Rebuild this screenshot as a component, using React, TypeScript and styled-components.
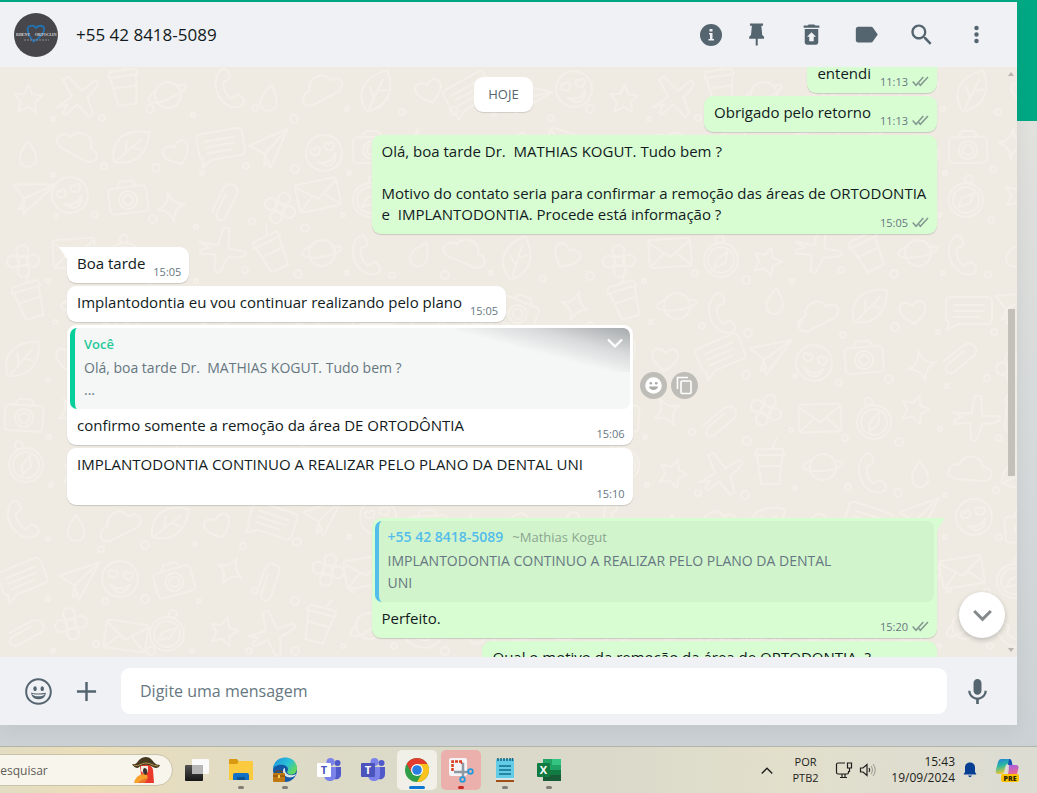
import React from "react";
import styled, { createGlobalStyle, css } from "styled-components";

const GlobalStyle = createGlobalStyle`
  * { box-sizing: border-box; }
  body { margin: 0; font-family: "Open Sans", "Noto Sans", sans-serif; font-weight: 400; color: #111b21; }
  button { border: 0; padding: 0; background: none; font: inherit; color: inherit; cursor: pointer; }
  svg { display: block; }
`;

/* ---------- page frame ---------- */

const Desktop = styled.div`
  display: flex;
  flex-direction: column;
  height: 100vh;
  min-height: 480px;
  overflow: hidden;
`;

const Stage = styled.div`
  flex: 1;
  min-height: 0;
  display: flex;
  padding: 2px 20px 21px 0;
  background: linear-gradient(#00a884 0 121px, #e1e1dd 121px, #d5d9da 460px, #ccd1d5 100%);
`;

const Chat = styled.main`
  flex: 1;
  min-width: 0;
  display: flex;
  flex-direction: column;
  background: #efeae2;
  box-shadow: 0 6px 18px rgba(11, 20, 26, 0.06);
`;

const Header = styled.header`
  display: flex;
  align-items: center;
  height: 65px;
  padding: 0 13px 0 14px;
  background: #f0f1f5;
  flex: none;
`;

const Contact = styled.h1`
  flex: 1;
  margin: 0 0 0 18px;
  font-size: 17px;
  font-weight: 400;
  line-height: 24px;
`;

const HeaderButton = styled.button<{ $narrow?: boolean }>`
  display: grid;
  place-items: center;
  width: ${(p) => (p.$narrow ? 37 : 55)}px;
  height: 44px;
  color: #54656f;
`;

const Panel = styled.section`
  position: relative;
  flex: 1;
  min-height: 0;
  overflow: hidden;
`;

const Wallpaper = styled.svg`
  position: absolute;
  inset: 0;
  width: 100%;
  height: 100%;
`;

const Messages = styled.div`
  position: relative;
  display: flex;
  flex-direction: column;
  gap: 3px;
  margin-top: -10px;
  padding: 0 80px 0 67px;
`;

/* ---------- messages ---------- */

const Row = styled.div<{ $out?: boolean; $first?: boolean }>`
  display: flex;
  align-items: center;
  gap: 7px;
  justify-content: ${(p) => (p.$out ? "flex-end" : "flex-start")};
  margin-top: ${(p) => (p.$first ? 10 : 0)}px;
`;

const Bubble = styled.article<{ $out?: boolean; $tail?: boolean; $wide?: boolean }>`
  position: relative;
  width: ${(p) => (p.$wide ? "65%" : "auto")};
  max-width: 65%;
  padding: 3px;
  border-radius: 9px;
  background: ${(p) => (p.$out ? "#d9fdd3" : "#ffffff")};
  box-shadow: 0 1px 1px rgba(11, 20, 26, 0.16);
  ${(p) =>
    p.$tail &&
    css`
      border-top-${p.$out ? "right" : "left"}-radius: 0;
      &::before {
        content: "";
        position: absolute;
        top: 0;
        ${p.$out ? "left" : "right"}: 100%;
        width: 8px;
        height: 12px;
        background: inherit;
        clip-path: polygon(${p.$out ? "0 0, 100% 0, 0 100%" : "0 0, 100% 0, 100% 100%"});
      }
    `}
`;

const Body = styled.p`
  margin: 0;
  padding: 3px 5px 6px 7px;
  font-size: 15px;
  line-height: 21px;
  white-space: pre-wrap;
`;

const MetaSpace = styled.span<{ $out?: boolean }>`
  display: inline-block;
  width: ${(p) => (p.$out ? 58 : 36)}px;
  height: 1px;
`;

const Meta = styled.div`
  position: absolute;
  right: 8px;
  bottom: 4px;
  display: flex;
  align-items: center;
  gap: 4px;
  color: #667781;
  font-size: 11px;
  line-height: 15px;
`;

const Quote = styled.blockquote<{ $out?: boolean }>`
  position: relative;
  margin: 0 0 3px;
  padding: 5px 90px 8px 9px;
  border-left: ${(p) => (p.$out ? "4px solid #53bdeb" : "5px solid #06cf9c")};
  border-radius: 7px;
  background: ${(p) => (p.$out ? "#d1f4cc" : "#f5f6f6")};
  overflow: hidden;
`;

const QuoteName = styled.div<{ $out?: boolean }>`
  margin-bottom: 2px;
  font-size: ${(p) => (p.$out ? 14 : 13)}px;
  line-height: 22px;
  font-weight: 600;
  color: ${(p) => (p.$out ? "#53bdeb" : "#1fc998")};
`;

const Alias = styled.span`
  margin-left: 9px;
  font-size: 13px;
  font-weight: 400;
  color: #8ba58f;
`;

const QuoteText = styled.div`
  color: #667781;
  font-size: 14px;
  line-height: 22px;
  white-space: pre-wrap;
`;

const MenuCorner = styled.button`
  position: absolute;
  top: 0;
  right: 0;
  display: flex;
  justify-content: flex-end;
  width: 174px;
  height: 44px;
  padding: 9px 7px;
  color: #ffffff;
  background: linear-gradient(15deg, rgba(11, 20, 26, 0) 45%, rgba(11, 20, 26, 0.12) 70%, rgba(11, 20, 26, 0.34));
`;

const RoundAction = styled.button`
  display: grid;
  place-items: center;
  width: 27px;
  height: 27px;
  border-radius: 50%;
  background: #bfbdb7;
  color: #ffffff;
  & + & { margin-left: -3px; }
`;

const DayChip = styled.div`
  position: absolute;
  top: 10px;
  left: 0;
  right: 10px;
  display: flex;
  justify-content: center;
  span {
    padding: 7px 14px;
    border-radius: 9px;
    background: #ffffff;
    box-shadow: 0 1px 1px rgba(11, 20, 26, 0.14);
    color: #54656f;
    font-size: 13px;
    line-height: 21px;
  }
`;

const Scrollbar = styled.div`
  position: absolute;
  top: 0;
  right: 2px;
  bottom: 0;
  width: 8px;
  display: flex;
  flex-direction: column;
  align-items: center;
  justify-content: space-between;
  padding: 5px 0;
  color: #b9b6b0;
`;

const Thumb = styled.div`
  position: absolute;
  top: 41%;
  right: 0;
  width: 7px;
  height: 167px;
  background: #c3c0ba;
`;

const JumpDown = styled.button`
  position: absolute;
  right: 12px;
  bottom: 19px;
  display: grid;
  place-items: center;
  width: 46px;
  height: 46px;
  border-radius: 50%;
  background: #ffffff;
  color: #84898c;
  box-shadow: 0 2px 5px rgba(11, 20, 26, 0.22);
`;

const Composer = styled.footer`
  display: flex;
  align-items: center;
  flex: none;
  height: 68px;
  padding: 0 16px 0 14px;
  background: #f0f1f5;
  color: #54656f;
`;

const ComposerButton = styled.button`
  display: grid;
  place-items: center;
  width: 48px;
  height: 46px;
`;

const MessageInput = styled.input`
  flex: 1;
  min-width: 0;
  height: 46px;
  margin: 0 6px 0 11px;
  padding: 0 19px;
  border: 0;
  border-radius: 9px;
  background: #ffffff;
  color: #111b21;
  font: 400 16px "Open Sans", sans-serif;
  &::placeholder { color: #667781; opacity: 1; }
`;

/* ---------- taskbar ---------- */

const Taskbar = styled.nav`
  display: flex;
  align-items: center;
  flex: none;
  height: 47px;
  border-top: 1px solid #b3b4a8;
  background: linear-gradient(90deg, #e2dcc2 0, #ecdfb9 90px, #e3dcc2 200px, #dcdac7 320px, #dad9ca 600px, #e2dfcb 780px, #dddcd2 1000px);
`;

const SearchBox = styled.label`
  display: flex;
  align-items: center;
  width: 232px;
  height: 32px;
  margin: 0 2px 0 -59px;
  padding: 0 12px 0 51px;
  border: 1px solid #c9c2ab;
  border-radius: 16px;
  background: #f8f5ec;
  input {
    flex: 1;
    min-width: 0;
    padding: 0;
    border: 0;
    background: none;
    font: 400 12px "Open Sans", sans-serif;
    &::placeholder { color: #5f5d58; opacity: 1; }
  }
`;

const AppButton = styled.button<{ $tile?: string }>`
  position: relative;
  display: grid;
  place-items: center;
  width: 40px;
  height: 40px;
  margin: 0 2px;
  border-radius: 5px;
  background: ${(p) => p.$tile || "none"};
`;

const Running = styled.i<{ $color: string; $long?: boolean }>`
  position: absolute;
  bottom: 1px;
  left: 50%;
  width: ${(p) => (p.$long ? 16 : 6)}px;
  height: 3px;
  border-radius: 2px;
  background: ${(p) => p.$color};
  transform: translateX(-50%);
`;

const Tray = styled.div`
  display: flex;
  align-items: center;
  margin-left: auto;
  padding-right: 18px;
  color: #1d1d1b;
  line-height: 16px;
`;

const TrayButton = styled.button<{ $width: number; $align?: string }>`
  display: flex;
  flex-direction: column;
  align-items: ${(p) => p.$align || "center"};
  width: ${(p) => p.$width}px;
  font-size: ${(p) => (p.$align ? 12 : 11)}px;
`;

/* ---------- wallpaper ---------- */

const TILE_W = 596;
const TILE_H = 590;

const motifs = [
  <path key="star" d="M0-14 4-5 14-4 7 3 9 13 0 8-9 13-7 3-14-4-4-5Z" />,
  <path key="spark" d="M0-15Q2-2 14 0 2 2 0 15-2 2-14 0-2-2 0-15Z" />,
  <path key="heart" d="M0 12C-24-3-9-17 0-6 9-17 24-3 0 12Z" />,
  <g key="planet"><circle r="13" /><path d="M-12-5C-26 4-20 10 0 4S24-12 11-8" /></g>,
  <g key="mail"><rect x="-21" y="-14" width="42" height="28" rx="3" /><path d="M-20-11 0 4 20-11M-19 12-6 0M19 12 6 0" /></g>,
  <g key="face"><circle r="18" /><path d="M-10-2C-15-8-8-11-7-7-4-11 1-7-5-1ZM5-1C0-7 7-10 8-6 12-9 16-4 9 1ZM-9 6Q2 14 10 5 6 16-3 13Z" /></g>,
  <path key="cloud" d="M-15 10C-29 8-21-7-12-4-8-18 11-15 11-4 25-5 23 10 12 10Z" />,
  <path key="plane" d="M-22 2-4-3-7-22-1-23 7-5 22-10C28-9 26-4 10 3L10 20 5 22-2 6-16 12-18 9-11 3Z" />,
  <g key="clip"><path d="M-17 8-2-12C7-21 16-12 11-5L-4 15C-10 21-16 16-12 9L0-7" /></g>,
  <g key="note"><path d="M-23-9Q-24-15-18-15H18Q24-15 23-9V7Q23 13 17 12H-11L-22 18-20 10-23 7Z" /><path d="M-15-7H15M-15-1H14M-15 5H10" /></g>,
  <path key="phone" d="M-15-12C-12-20-5-18-3-9L-8-4Q-5 7 4 10L9 4C18 6 20 12 13 16-1 23-20 6-15-12Z" />,
  <g key="compass"><circle r="17" /><circle r="13" /><path d="M-4-1 7-8 4 3-7 8Z" /><circle cy="-21" r="4" /></g>,
  <g key="camera"><rect x="-19" y="-12" width="38" height="26" rx="4" /><circle cy="1" r="9" /><circle cy="1" r="5" /><path d="M-10-12-6-18H6L10-12" /></g>,
  <g key="leaf"><path d="M-16 15C-22-10-3-19 17-17 17 3 7 18-16 15ZM-13 13 10-10M-5 4-5-7M1-1 10 1" /></g>,
  <g key="cup"><path d="M-13-13H13L9 16H-9ZM-15-13-13-19H13L15-13M-11-2H11M2-19 7-29" /></g>,
  <g key="flower"><circle r="5" /><circle cy="-10" r="6" /><circle cy="10" r="6" /><circle cx="-10" r="6" /><circle cx="10" r="6" /></g>,
  <g key="paper"><path d="M-20-7 21-17-3 19-6 4ZM-6 4 21-17M-6 4-9 16-3 12" /></g>,
  <path key="drop" d="M0-14C7-4 9 0 8 6 5 14-5 14-8 6-9 0-7-4 0-14Z" />,
];

const noise = (n: number) => {
  const v = Math.sin(n * 127.1 + 11.7) * 43758.5453;
  return v - Math.floor(v);
};

const doodles = Array.from({ length: 132 }, (_, i) => {
  const col = i % 12;
  const row = Math.floor(i / 12);
  return {
    x: Math.round(25 + col * 49.6 + (noise(i) - 0.5) * 14),
    y: Math.round(27 + row * 53.6 + (noise(i + 400) - 0.5) * 14),
    turn: Math.round(noise(i + 800) * 60 - 30),
    kind: (i * 7 + row * 5) % motifs.length,
  };
});

const Doodles = () => (
  <Wallpaper aria-hidden="true">
    <defs>
      <pattern id="doodles" width={TILE_W} height={TILE_H} patternUnits="userSpaceOnUse">
        <g fill="none" stroke="#f4f0e9" strokeWidth="2" strokeLinejoin="round" strokeLinecap="round">
          {doodles.map((d, i) => (
            <g key={i}>
              <g transform={`translate(${d.x} ${d.y}) rotate(${d.turn})`}>{motifs[d.kind]}</g>
              <circle cx={Math.min(d.x + 25, 590)} cy={Math.min(d.y + 20, 584)} r={2 + (i % 3)} />
            </g>
          ))}
        </g>
      </pattern>
    </defs>
    <rect width="100%" height="100%" fill="url(#doodles)" />
  </Wallpaper>
);

/* ---------- icons ---------- */

const Icon = ({ d, size = 27 }: { d: string; size?: number }) => (
  <svg width={size} height={size} viewBox="0 0 24 24" fill="currentColor" aria-hidden="true">
    <path d={d} />
  </svg>
);

const paths = {
  pin: "M6.2 2.2h11.600v2h-1.500l.800 8.200 1.600 1.600v1.800h-5.600v6h-1.800v-6H5.500v-1.800l1.600-1.600.800-8.200H6.200Z",
  trash: "M19 4h-3.500l-1-1h-5l-1 1H5v2h14V4ZM6 7v12c0 1.100.900 2 2 2h8c1.100 0 2-.900 2-2V7H6Zm8 7v4h-4v-4H8l4-4 4 4h-2Z",
  label: "M17.600 5.800C17.300 5.300 16.700 5 16 5H4.500C3.400 5 2.500 5.900 2.500 7v10c0 1.100.900 2 2 2H16c.700 0 1.300-.300 1.600-.800L22 12l-4.400-6.200Z",
  search:
    "M15.900,14.300H15L14.700,14c1-1.100,1.600-2.700,1.600-4.300c0-3.700-3-6.700-6.700-6.700S3,6,3,9.700s3,6.700,6.700,6.700c1.600,0,3.200-0.600,4.300-1.600l0.300,0.300v0.800l5.100,5.100l1.500-1.500L15.900,14.300z M9.700,14.300c-2.600,0-4.600-2.100-4.600-4.600s2.100-4.600,4.600-4.600s4.600,2.100,4.600,4.600S12.300,14.300,9.700,14.300z",
  dots: "M12 8.200a2 2 0 1 0 0-4 2 2 0 0 0 0 4ZM12 14a2 2 0 1 0 0-4 2 2 0 0 0 0 4ZM12 19.800a2 2 0 1 0 0-4 2 2 0 0 0 0 4Z",
  mic: "M11.999,14.942c2.001,0,3.531-1.530,3.531-3.531V4.350c0-2.001-1.530-3.531-3.531-3.531S8.469,2.350,8.469,4.350v7.061C8.469,13.412,9.999,14.942,11.999,14.942z M18.237,11.412c0,3.531-2.942,6.002-6.237,6.002s-6.237-2.471-6.237-6.002H3.761c0,4.001,3.178,7.297,7.061,7.885v3.884h2.354v-3.884c3.884-0.588,7.061-3.884,7.061-7.885L18.237,11.412z",
  plus: "M10.900 3.500h2.200v7.400h7.400v2.200h-7.400v7.400h-2.200v-7.400H3.500v-2.200h7.400Z",
  smile:
    "M9.153,11.603c0.795,0,1.439-0.879,1.439-1.962S9.948,7.679,9.153,7.679S7.714,8.558,7.714,9.641S8.358,11.603,9.153,11.603z M5.949,12.965c-0.026-0.307-0.131,5.218,6.063,5.551c6.066-0.250,6.066-5.551,6.066-5.551C12,14.381,5.949,12.965,5.949,12.965z M17.312,14.073c0,0-0.669,1.959-5.051,1.959c-3.505,0-5.388-1.164-5.607-1.959C6.654,14.073,12.566,15.128,17.312,14.073z M11.804,1.011c-6.195,0-10.826,5.022-10.826,11.217s4.826,10.761,11.021,10.761S23.020,18.423,23.020,12.228C23.021,6.033,17.999,1.011,11.804,1.011z M12,21.354c-5.273,0-9.381-3.886-9.381-9.159s3.942-9.548,9.215-9.548s9.548,4.275,9.548,9.548C21.381,17.467,17.273,21.354,12,21.354z M15.108,11.603c0.795,0,1.439-0.879,1.439-1.962s-0.644-1.962-1.439-1.962s-1.439,0.879-1.439,1.962S14.313,11.603,15.108,11.603z",
};

const InfoIcon = () => (
  <svg width="22" height="22" viewBox="0 0 22 22" aria-hidden="true">
    <circle cx="11" cy="11" r="11" fill="#54656f" />
    <path d="M9.500 5h3v2.500h-3ZM9 9h3.500v6H14v1.500H8.500V15H10v-4.500H9Z" fill="#f0f1f5" />
  </svg>
);

const Avatar = () => (
  <svg width="44" height="44" viewBox="0 0 44 44" role="img" aria-label="Foto do contato">
    <circle cx="22" cy="22" r="22" fill="#47474b" />
    <path d="M20 29C13 21 12 14 16 13c3-1 5 0 6 2 2-3 7-3 8 0 1 4-3 9-11 14" fill="none" stroke="#2273b4" strokeWidth="1.800" />
    <g fill="#d5d5d8" fontFamily="Liberation Serif, serif" fontWeight="700" fontSize="4">
      <text x="2" y="23">RDENT</text>
      <text x="21" y="23">ORTOCLIN</text>
    </g>
    <path d="M10 27h25" stroke="#8a8a90" strokeWidth="1" strokeDasharray="2 1" />
  </svg>
);

const Ticks = () => (
  <svg width="17" height="11" viewBox="0 0 17 11" fill="none" stroke="#83988f" strokeWidth="1.500" aria-hidden="true">
    <path d="M.700 5.500 4 9.300 11.300.900M6.800 7.600 8.300 9.300 16 .900" />
  </svg>
);

const Chevron = ({ size = 16, up, weight = 2 }: { size?: number; up?: boolean; weight?: number }) => (
  <svg width={size} height={size * 0.75} viewBox="0 0 16 12" fill="none" stroke="currentColor" strokeWidth={weight} aria-hidden="true">
    <path d={up ? "M1 10 8 3l7 7" : "M1 2.500 8 9.500l7-7"} />
  </svg>
);

/* ---------- message component ---------- */

type MessageProps = {
  text: string;
  time: string;
  out?: boolean;
  first?: boolean;
  wide?: boolean;
  tail?: boolean;
  quote?: React.ReactNode;
  actions?: React.ReactNode;
};

const Message = ({ text, time, out, first, tail, wide, quote, actions }: MessageProps) => (
  <Row $out={out} $first={first}>
    <Bubble $out={out} $tail={first || tail} $wide={wide}>
      {quote}
      <Body>
        {text}
        <MetaSpace $out={out} />
      </Body>
      <Meta>
        <time>{time}</time>
        {out && <Ticks />}
      </Meta>
    </Bubble>
    {actions}
  </Row>
);

/* ---------- taskbar drawings ---------- */

const Art = ({ children, size = 26 }: { children: React.ReactNode; size?: number }) => (
  <svg width={size} height={size} viewBox="0 0 26 26" aria-hidden="true">{children}</svg>
);

const Parrot = () => (
  <svg width="28" height="27" viewBox="0 0 28 27" aria-hidden="true">
    <path d="M8 9c5-3 12-2 13 4l1 13H8l1-9Z" fill="#e8392b" />
    <path d="M2 26c2-8 8-10 13-8 2 3-1 7-5 8Z" fill="#f7a12c" />
    <path d="M6 26c3-3 6-4 9-5 0 3-2 5-4 5Z" fill="#e9742a" />
    <path d="M9 9h7v6l-4 2-3-3Z" fill="#f5e9df" />
    <path d="M12 11c4 0 4 5 2 7-3-1-4-4-2-7Z" fill="#3a332f" />
    <path d="M0 7c3 1 5-1 7-4 4-4 10-4 13 0 3 4 5 5 8 5-1 3-4 4-7 2C16 7 10 7 6 11 3 11 1 9 0 7Z" fill="#463a22" />
    <path d="M2 8c5 2 7-2 12-2s7 3 12 3" fill="none" stroke="#b99445" />
  </svg>
);

const Teams = ({ tile, letter }: { tile: string; letter: string }) => (
  <Art>
    <circle cx="14.500" cy="5" r="4" fill="#7b83eb" />
    <circle cx="21.500" cy="6" r="3" fill="#5059c9" />
    <path d="M18 10h7v7c0 4-3 6-7 5Z" fill="#5059c9" />
    <path d="M8 10h12v8c0 8-12 8-12 0Z" fill="#7b83eb" />
    <rect x="1" y="6" width="14" height="14" rx="1" fill={tile} />
    <text x="8" y="17" textAnchor="middle" fontFamily="Open Sans, sans-serif" fontSize="11" fontWeight="700" fill={letter}>T</text>
  </Art>
);

const taskbarApps: { name: string; art: React.ReactNode; tile?: string; run?: string; long?: boolean }[] = [
  {
    name: "Visão de tarefas",
    art: (
      <Art>
        <defs>
          <linearGradient id="tv" x2="0" y2="1"><stop stopColor="#525252" /><stop offset="1" stopColor="#161616" /></linearGradient>
        </defs>
        <rect x="8" y="2" width="17" height="15" rx="1" fill="#fafafa" />
        <rect x="1" y="8" width="18" height="16" rx="1" fill="url(#tv)" />
        <path d="M8 8h11v9H8Z" fill="#b6b6b6" />
      </Art>
    ),
  },
  {
    name: "Explorador de Arquivos",
    run: "#807e76",
    art: (
      <Art>
        <path d="M1 3q0-1 1-1h7l2 3v4H1Z" fill="#d99a12" />
        <path d="M1 7h8l2-3h13q1 0 1 1v18H1Z" fill="#fcca3f" />
        <path d="M5 23v-5q0-2 2-2h12q2 0 2 2v5Z" fill="#1271c4" />
        <path d="M9 20h8v3H9Z" fill="#0b5292" />
      </Art>
    ),
  },
  {
    name: "Microsoft Edge",
    run: "#807e76",
    art: (
      <Art>
        <defs>
          <linearGradient id="eg" x2="1" y2=".600"><stop stopColor="#1f8fdc" /><stop offset=".600" stopColor="#29c1d8" /><stop offset="1" stopColor="#63d85c" /></linearGradient>
        </defs>
        <circle cx="13" cy="13" r="12" fill="#1259a8" />
        <path d="M1 12C2-3 24-3 25 11c0 8-9 8-10 4 2-2 1-6-3-7C7 7 2 9 1 12Z" fill="url(#eg)" />
        <path d="M13 11c-1 6 5 9 11 6l-1 2c-5 3-12 1-12-5 0-2 1-3 2-3Z" fill="#f4f4ef" opacity=".9" />
        <rect x="1" y="16" width="12" height="9" rx="1" fill="#c07813" />
        <path d="M4 16v-2h6v2M1 19h12" fill="none" stroke="#7a470b" />
        <path d="M6 18h2v3H6Z" fill="#ffd35a" />
      </Art>
    ),
  },
  { name: "Microsoft Teams", art: <Teams tile="#fff" letter="#4b53bc" /> },
  { name: "Microsoft Teams (trabalho)", art: <Teams tile="#4b53bc" letter="#fff" /> },
  {
    name: "Google Chrome",
    tile: "#f0efe8",
    run: "#0b78d4",
    long: true,
    art: (
      <Art>
        <circle cx="13" cy="13" r="12" fill="#2e9e49" />
        <path d="M2.600 7A12 12 0 0 1 23.400 7H13L7.800 16Z" fill="#e33b2e" />
        <path d="M23.400 7A12 12 0 0 1 13 25l5.200-9L13 7Z" fill="#fcc31e" />
        <circle cx="13" cy="13" r="6" fill="#fff" />
        <circle cx="13" cy="13" r="4.800" fill="#2a7de1" />
      </Art>
    ),
  },
  {
    name: "Ferramenta de Captura",
    tile: "#ebb0ab",
    run: "#c92a22",
    art: (
      <Art>
        <rect x="1" y="1" width="18" height="18" rx="2" fill="#f4f4f6" />
        <path d="M4.500 14V4.500H14V7" fill="none" stroke="#d8401f" strokeWidth="2.500" strokeDasharray="3 1" />
        <path d="M15 6v14M6 15h14" stroke="#8f99a3" strokeWidth="2.500" />
        <circle cx="14.500" cy="22.500" r="2.300" fill="none" stroke="#1f9be0" strokeWidth="1.800" />
        <circle cx="22.500" cy="14.500" r="2.300" fill="none" stroke="#1f9be0" strokeWidth="1.800" />
      </Art>
    ),
  },
  {
    name: "Bloco de Notas",
    run: "#807e76",
    art: (
      <Art>
        <rect x="4" y="2" width="18" height="21" rx="1" fill="#62cbe6" />
        <path d="M6 1v3M9 1v3M12 1v3M15 1v3M18 1v3M20.500 1v3" stroke="#17647f" strokeWidth="1.500" />
        <path d="M7 9h12M7 13h12M7 17h12" stroke="#12708f" strokeWidth="1.500" />
        <path d="M4 22h18" stroke="#f2efe9" strokeWidth="1.500" />
        <path d="M4 24h18" stroke="#a34d16" strokeWidth="2" />
      </Art>
    ),
  },
  {
    name: "Excel",
    run: "#807e76",
    art: (
      <Art>
        <path d="M7 2h9v22H7Z" fill="#21a366" />
        <path d="M16 2h9v6h-9Z" fill="#33c481" />
        <path d="M16 8h9v5h-9Z" fill="#21a366" />
        <path d="M7 13h18v5H7Z" fill="#107c41" />
        <path d="M7 18h18v6H7Z" fill="#185c37" />
        <rect x="1" y="6" width="13" height="14" rx="1" fill="#107c41" />
        <text x="7.500" y="17" textAnchor="middle" fontFamily="Open Sans, sans-serif" fontSize="11" fontWeight="700" fill="#fff">X</text>
      </Art>
    ),
  },
];

export default function App() {
  return (
    <Desktop>
      <GlobalStyle />
      <Stage>
        <Chat>
          <Header>
            <Avatar />
            <Contact>+55 42 8418-5089</Contact>
            <HeaderButton $narrow aria-label="Informações"><InfoIcon /></HeaderButton>
            <HeaderButton aria-label="Fixar"><Icon d={paths.pin} /></HeaderButton>
            <HeaderButton aria-label="Arquivar"><Icon d={paths.trash} /></HeaderButton>
            <HeaderButton aria-label="Etiquetar"><Icon d={paths.label} /></HeaderButton>
            <HeaderButton aria-label="Pesquisar"><Icon d={paths.search} /></HeaderButton>
            <HeaderButton aria-label="Mais opções"><Icon d={paths.dots} /></HeaderButton>
          </Header>

          <Panel>
            <Doodles />
            <Messages>
              <Message out tail text="entendi" time="11:13" />
              <Message out text="Obrigado pelo retorno" time="11:13" />
              <Message
                out
                wide
                text={"Olá, boa tarde Dr.  MATHIAS KOGUT. Tudo bem ?\n\nMotivo do contato seria para confirmar a remoção das áreas de ORTODONTIA e  IMPLANTODONTIA. Procede está informação ?"}
                time="15:05"
              />
              <Message first text="Boa tarde" time="15:05" />
              <Message text="Implantodontia eu vou continuar realizando pelo plano" time="15:05" />
              <Message
                wide
                text="confirmo somente a remoção da área DE ORTODÔNTIA"
                time="15:06"
                quote={
                  <Quote>
                    <QuoteName>Você</QuoteName>
                    <QuoteText>{"Olá, boa tarde Dr.  MATHIAS KOGUT. Tudo bem ?\n..."}</QuoteText>
                    <MenuCorner aria-label="Menu da mensagem"><Chevron weight={2.2} /></MenuCorner>
                  </Quote>
                }
                actions={
                  <>
                    <RoundAction aria-label="Reagir">
                      <svg width="17" height="17" viewBox="0 0 17 17" aria-hidden="true">
                        <circle cx="8.500" cy="8.500" r="8.300" fill="#fff" />
                        <circle cx="5.800" cy="6.200" r="1.300" fill="#aaa9a5" />
                        <circle cx="11.200" cy="6.200" r="1.300" fill="#aaa9a5" />
                        <path d="M4 9.500h9c-.500 4.500-8.500 4.500-9 0Z" fill="#aaa9a5" />
                      </svg>
                    </RoundAction>
                    <RoundAction aria-label="Copiar">
                      <svg width="17" height="19" viewBox="0 0 17 19" fill="none" stroke="#fff" strokeWidth="1.600" aria-hidden="true">
                        <path d="M1.500 13V1.500H12" />
                        <rect x="5" y="5" width="10" height="12.500" rx="1" />
                      </svg>
                    </RoundAction>
                  </>
                }
              />
              <Message wide text={"IMPLANTODONTIA CONTINUO A REALIZAR PELO PLANO DA DENTAL UNI\n"} time="15:10" />
              <Message
                out
                first
                wide
                text="Perfeito."
                time="15:20"
                quote={
                  <Quote $out>
                    <QuoteName $out>
                      +55 42 8418-5089<Alias>~Mathias Kogut</Alias>
                    </QuoteName>
                    <QuoteText>IMPLANTODONTIA CONTINUO A REALIZAR PELO PLANO DA DENTAL UNI</QuoteText>
                  </Quote>
                }
              />
              <Message out text="Qual o motivo da remoção da área de ORTODONTIA  ?" time="15:21" />
            </Messages>
            <DayChip><span>HOJE</span></DayChip>
            <Scrollbar>
              <svg width="6" height="4" viewBox="0 0 6 4" aria-hidden="true"><path d="M0 4 3 0l3 4Z" fill="currentColor" /></svg>
              <Thumb />
              <svg width="6" height="4" viewBox="0 0 6 4" aria-hidden="true"><path d="M0 0 3 4l3-4Z" fill="currentColor" /></svg>
            </Scrollbar>
            <JumpDown aria-label="Ir para o fim"><Chevron size={19} weight={2.6} /></JumpDown>
          </Panel>

          <Composer>
            <ComposerButton aria-label="Emojis"><Icon d={paths.smile} size={29} /></ComposerButton>
            <ComposerButton aria-label="Anexar"><Icon d={paths.plus} /></ComposerButton>
            <MessageInput aria-label="Mensagem" placeholder="Digite uma mensagem" />
            <ComposerButton aria-label="Gravar áudio"><Icon d={paths.mic} /></ComposerButton>
          </Composer>
        </Chat>
      </Stage>

      <Taskbar>
        <SearchBox>
          <input aria-label="Pesquisar" placeholder="Pesquisar" />
          <Parrot />
        </SearchBox>
        {taskbarApps.map((a) => (
          <AppButton key={a.name} aria-label={a.name} $tile={a.tile}>
            {a.art}
            {a.run && <Running $color={a.run} $long={a.long} />}
          </AppButton>
        ))}
        <Tray>
          <TrayButton $width={24} aria-label="Ícones ocultos"><Chevron size={12} up weight={1.8} /></TrayButton>
          <TrayButton $width={53}><span>POR</span><span>PTB2</span></TrayButton>
          <TrayButton $width={24} aria-label="Rede">
            <svg width="18" height="18" viewBox="0 0 18 18" fill="none" stroke="#1d1d1b" strokeWidth="1.200" aria-hidden="true">
              <path d="M10 2H3Q1.500 2 1.500 3.500v8Q1.500 13 3 13h9q1.500 0 1.500-1.500V10M5 16.500h7M7 13v3.500M10 13v3.500M12.500 2h4v5h-4ZM14.500 7v4" />
            </svg>
          </TrayButton>
          <TrayButton $width={24} aria-label="Volume">
            <svg width="18" height="16" viewBox="0 0 18 16" fill="none" stroke="#1d1d1b" strokeWidth="1.200" aria-hidden="true">
              <path d="M1.500 6v4H4l4 3.500v-11L4 6ZM10 6q1.500 2 0 4" />
              <path d="M12 4q3 4 0 8M14 2q4.500 6 0 12" stroke="#a5a49b" />
            </svg>
          </TrayButton>
          <TrayButton $width={75} $align="flex-end"><span>15:43</span><span>19/09/2024</span></TrayButton>
          <TrayButton $width={30} aria-label="Notificações">
            <svg width="14" height="16" viewBox="0 0 14 16" fill="#063e94" aria-hidden="true">
              <path d="M7 .500c3.500 0 5 2.500 5 5V10l1.500 2.500H.500L2 10V5.500C2 3 3.500.500 7 .500ZM5 13.500h4Q7 17 5 13.500Z" />
            </svg>
          </TrayButton>
          <TrayButton $width={34} $align="flex-end" aria-label="Copilot">
            <svg width="24" height="24" viewBox="0 0 24 24" aria-hidden="true">
              <defs>
                <linearGradient id="ca" x2=".300" y2="1"><stop stopColor="#1c7be0" /><stop offset=".500" stopColor="#2eb8a0" /><stop offset="1" stopColor="#f4c62c" /></linearGradient>
                <linearGradient id="cb" x2=".300" y2="1"><stop stopColor="#a15be8" /><stop offset="1" stopColor="#f06a8a" /></linearGradient>
              </defs>
              <path d="M6 1h8q2 0 2.500 2L17 6h-4q-2 0-2.500 2L9 14q-.500 2-3 2H3q-3 0-2-4L3 4q1-3 3-3Z" fill="url(#ca)" />
              <path d="M14 7h7q3 0 2.500 3L22 16q-1 2-3 2h-8q2-1 2.500-4Z" fill="url(#cb)" />
              <path d="M14 1q2 0 2.500 2l1 4H13Z" fill="#174fb5" />
              <rect x="6" y="16" width="18" height="8" rx="2" fill="#ffc400" />
              <text x="15" y="23" textAnchor="middle" fontFamily="Open Sans, sans-serif" fontSize="7" fontWeight="800" fill="#2b2200">PRE</text>
            </svg>
          </TrayButton>
        </Tray>
      </Taskbar>
    </Desktop>
  );
}
